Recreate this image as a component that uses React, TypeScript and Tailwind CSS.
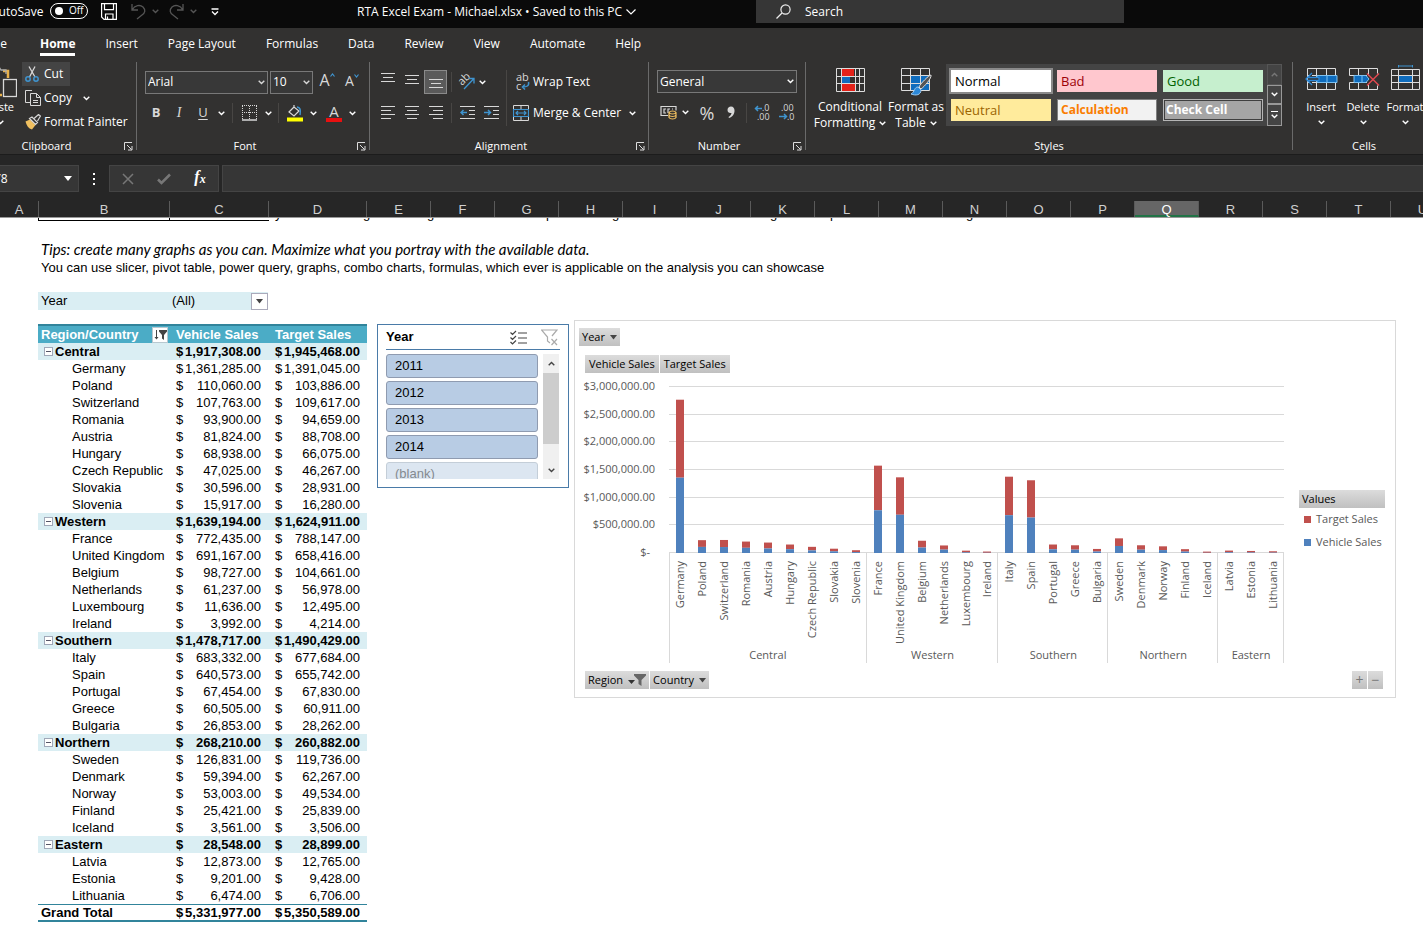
import React from "react";

const regions = [
  {
    name: "Central",
    vehicle: "1,917,308.00",
    target: "1,945,468.00",
    countries: [
      ["Germany", 1361285, 1391045],
      ["Poland", 110060, 103886],
      ["Switzerland", 107763, 109617],
      ["Romania", 93900, 94659],
      ["Austria", 81824, 88708],
      ["Hungary", 68938, 66075],
      ["Czech Republic", 47025, 46267],
      ["Slovakia", 30596, 28931],
      ["Slovenia", 15917, 16280],
    ],
  },
  {
    name: "Western",
    vehicle: "1,639,194.00",
    target: "1,624,911.00",
    countries: [
      ["France", 772435, 788147],
      ["United Kingdom", 691167, 658416],
      ["Belgium", 98727, 104661],
      ["Netherlands", 61237, 56978],
      ["Luxembourg", 11636, 12495],
      ["Ireland", 3992, 4214],
    ],
  },
  {
    name: "Southern",
    vehicle: "1,478,717.00",
    target: "1,490,429.00",
    countries: [
      ["Italy", 683332, 677684],
      ["Spain", 640573, 655742],
      ["Portugal", 67454, 67830],
      ["Greece", 60505, 60911],
      ["Bulgaria", 26853, 28262],
    ],
  },
  {
    name: "Northern",
    vehicle: "268,210.00",
    target: "260,882.00",
    countries: [
      ["Sweden", 126831, 119736],
      ["Denmark", 59394, 62267],
      ["Norway", 53003, 49534],
      ["Finland", 25421, 25839],
      ["Iceland", 3561, 3506],
    ],
  },
  {
    name: "Eastern",
    vehicle: "28,548.00",
    target: "28,899.00",
    countries: [
      ["Latvia", 12873, 12765],
      ["Estonia", 9201, 9428],
      ["Lithuania", 6474, 6706],
    ],
  },
] as { name: string; vehicle: string; target: string; countries: [string, number, number][] }[];

const money = (n: number) => n.toLocaleString("en-US", { minimumFractionDigits: 2 });

type BoxProps = { className?: string; children?: React.ReactNode };

const Chevron = ({ className = "" }: { className?: string }) => (
  <svg className={`shrink-0 ${className}`} width="7" height="5" viewBox="0 0 7 5" fill="none" stroke="currentColor" strokeWidth="1.4">
    <path d="M0.7 0.8 3.5 3.5 6.3 0.8" />
  </svg>
);

const Tool = ({ label, className = "", children }: BoxProps & { label: string }) => (
  <button aria-label={label} className={`flex h-6 shrink-0 items-center justify-center ${className}`}>
    {children}
  </button>
);

const Separator = () => <div className="h-[88px] w-px shrink-0 bg-[#6a6a6a]" />;

const Group = ({ title, className = "", launcher = true, children }: BoxProps & { title: string; launcher?: boolean }) => (
  <section aria-label={title} className={`flex h-[92px] shrink-0 flex-col justify-between ${className}`}>
    {children}
    <div className="flex h-4 items-center">
      <span className="flex-1 text-center text-[11px] leading-4">{title}</span>
      {launcher && (
        <button aria-label={`${title} settings`} className="flex w-4 items-center justify-end pr-[3px]">
          <svg width="9" height="9" viewBox="0 0 9 9" fill="none" stroke="#ddd">
            <path d="M0.5 8V0.5H8M3 3l4.5 4.5M8 4v4H4" />
          </svg>
        </button>
      )}
    </div>
  </section>
);

const Picker = ({ label, value, className = "" }: { label: string; value: string; className?: string }) => (
  <div className={`relative h-[23px] shrink-0 ${className}`}>
    <select aria-label={label} className="block h-full w-full appearance-none border border-[#787878] bg-[#383838] pl-[2px] text-xs text-white">
      <option>{value}</option>
    </select>
    <Chevron className="pointer-events-none absolute top-[9px] right-[3px]" />
  </div>
);

/* each pair is the [x, width] of a line of text in an alignment icon */
const Lines = ({ rows }: { rows: [number, number][] }) => (
  <svg width="14" height="16" viewBox="0 0 14 16" fill="#d8d8d8">
    {rows.map(([x, w], i) => (
      <rect key={i} x={x} y={1 + i * 4} width={w} height="1" />
    ))}
  </svg>
);

const TitleBar = () => (
  <header className="flex h-7 bg-[#0a0a0a] text-xs text-white">
    <div className="flex h-[23px] w-[357px] shrink-0 items-center">
      <span className="-ml-[9px] w-[59px] shrink-0">AutoSave</span>
      <button role="switch" aria-checked="false" aria-label="AutoSave" className="-mt-[2px] flex h-4 w-[38px] shrink-0 items-center gap-[6px] rounded-full border border-white pl-1 text-[10px]">
        <span className="h-2 w-2 rounded-full bg-white" />
        Off
      </button>
      <button aria-label="Save" className="ml-[13px]">
        <svg width="16" height="17" viewBox="0 0 16 17" fill="none" stroke="#fff" strokeWidth="1.2">
          <path d="M0.6 0.6h14.8v15.8H3L0.6 14zM3.5 0.6v6h9v-6M4.5 16v-5h7.500v5M6.500 16v-2.500" />
        </svg>
      </button>
      <button aria-label="Undo" className="ml-[14px] flex items-center gap-[6px] text-[#555]">
        <svg width="15" height="17" viewBox="0 0 15 17" fill="none" stroke="currentColor" strokeWidth="1.3">
          <path d="M1 1v6h6M1 7C4 2 9 1.500 12 4c3 3 2 6-1 8l-5 4" />
        </svg>
        <Chevron />
      </button>
      <button aria-label="Redo" className="ml-[10px] flex items-center gap-[6px] text-[#555]">
        <svg width="15" height="17" viewBox="0 0 15 17" fill="none" stroke="currentColor" strokeWidth="1.3">
          <path d="M14 1v6H8M14 7C11 2 6 1.500 3 4c-3 3-2 6 1 8l5 4" />
        </svg>
        <Chevron />
      </button>
      <button aria-label="Customize toolbar" className="ml-[14px]">
        <svg width="8" height="8" viewBox="0 0 8 8" fill="none" stroke="#fff" strokeWidth="1.3">
          <path d="M0.500 1h7M1 3.500 4 6.500 7 3.500" />
        </svg>
      </button>
    </div>
    <button className="flex h-[23px] w-[399px] shrink-0 items-center gap-1 text-left">
      RTA Excel Exam - Michael.xlsx&nbsp;•&nbsp;Saved to this PC
      <svg width="10" height="6" viewBox="0 0 10 6" fill="none" stroke="#fff" strokeWidth="1.2">
        <path d="M0.500 0.500 5 5 9.500 0.500" />
      </svg>
    </button>
    <label className="flex h-[23px] w-[368px] items-center gap-[14px] bg-[#363636] pl-5">
      <svg width="15" height="15" viewBox="0 0 15 15" fill="none" stroke="#eee" strokeWidth="1.2">
        <circle cx="9.500" cy="5.500" r="4.600" />
        <path d="M6 9 0.500 14.500" />
      </svg>
      <input type="search" aria-label="Search" placeholder="Search" className="min-w-0 flex-1 bg-transparent placeholder:text-white" />
    </label>
  </header>
);

const tabs = ["Insert", "Page Layout", "Formulas", "Data", "Review", "View", "Automate", "Help"];

const Tabs = () => (
  <nav className="flex h-[34px] gap-[30px] text-xs leading-[18px]">
    <a href="#file" className="-ml-[12px] w-[22px] pt-[7px]">File</a>
    <a href="#home" className="pt-[7px] font-bold">
      Home
      <span className="block h-[3px] bg-white" />
    </a>
    {tabs.map((tab) => (
      <a key={tab} href={`#${tab}`} className="pt-[7px] whitespace-nowrap">
        {tab}
      </a>
    ))}
  </nav>
);

const Clipboard = () => (
  <div className="w-[136px] shrink-0 overflow-hidden">
    <Group title="Clipboard" className="-ml-[27px] w-[163px]">
      <div className="flex">
        <button className="flex w-[49px] flex-col items-center pt-1 pl-[5px] text-[11px] leading-4">
          <svg width="34" height="33" viewBox="0 0 34 33" fill="none">
            <path d="M10 5H5v24h14M25 12V5h-5" stroke="#e8b14a" strokeWidth="2.500" />
            <path d="M10 8V4h4l2-3 2 3h5v4" stroke="#aaa" strokeWidth="1.300" />
            <rect x="20.500" y="13.500" width="13" height="17" fill="#323130" stroke="#d8d8d8" strokeWidth="1.300" />
          </svg>
          Paste
          <Chevron className="mt-[5px]" />
        </button>
        <div className="flex flex-col items-start text-xs">
          <button className="flex h-6 items-center gap-1 bg-[#444] px-[3px] pr-[7px]">
            <svg width="15" height="16" viewBox="0 0 15 16" fill="none">
              <path d="M4 0.500 10 11M10 0.500 4.500 11" stroke="#d8d8d8" strokeWidth="1.300" />
              <circle cx="3" cy="13" r="2.200" stroke="#3f94cf" strokeWidth="1.500" />
              <circle cx="11" cy="13" r="2.200" stroke="#3f94cf" strokeWidth="1.500" />
            </svg>
            Cut
          </button>
          <button className="flex h-6 items-center gap-[3px] px-[3px]">
            <svg width="16" height="16" viewBox="0 0 16 16" fill="none" stroke="#d8d8d8">
              <path d="M5 12.500H0.500v-12H7M5.500 3.500h6l4 4v8h-10zM11.500 3.500v4h4M8 10.500h5M8 12.500h5" />
            </svg>
            Copy
            <Chevron className="ml-2" />
          </button>
          <button className="flex h-6 items-center gap-[3px] px-[3px] whitespace-nowrap">
            <svg width="16" height="16" viewBox="0 0 16 16" fill="none">
              <path d="M0.500 7.500 5 5.500l5.500 5.500L7 15.500C3.500 14.500 1.500 11.500 0.500 7.500z" fill="#f0c060" />
              <path d="M4.500 4.500 7 3l5.500 5.500-2 2zM9 4.500l4.500-4 2 1.500-3 5" stroke="#d8d8d8" strokeWidth="1.200" />
            </svg>
            Format Painter
          </button>
        </div>
      </div>
    </Group>
  </div>
);

const Caret = ({ up = false }: { up?: boolean }) => (
  <svg className="mb-[10px]" width="5" height="4" viewBox="0 0 5 4" fill="none" stroke="#3f94cf" strokeWidth="1.200">
    <path d={up ? "M0.500 3.500 2.500 1 4.500 3.500" : "M0.500 0.500 2.500 3 4.500 0.500"} />
  </svg>
);

const FontGroup = () => (
  <Group title="Font" className="w-[232px]">
    <div className="flex flex-col gap-[7px] pt-2 pl-2">
      <div className="flex h-6 items-center text-[#d8d8d8]">
        <Picker label="Font" value="Arial" className="w-[123px]" />
        <Picker label="Font size" value="10" className="ml-[2px] w-[43px]" />
        <Tool label="Increase font size" className="w-[28px] pb-1 text-base">
          A
          <Caret up />
        </Tool>
        <Tool label="Decrease font size" className="w-[22px] pb-[2px] text-sm">
          A
          <Caret />
        </Tool>
      </div>
      <div className="flex h-6 items-center text-[#d8d8d8]">
        <Tool label="Bold" className="w-[22px] text-[13px] font-bold">B</Tool>
        <Tool label="Italic" className="w-6 font-[Liberation_Serif] text-sm italic">I</Tool>
        <Tool label="Underline" className="w-6 text-[13px] underline underline-offset-2">U</Tool>
        <Tool label="Underline style" className="w-3 text-white"><Chevron /></Tool>
        <div className="mx-[5px] h-5 w-px bg-[#484644]" />
        <Tool label="Borders" className="w-6">
          <svg width="16" height="16" viewBox="0 0 16 16" fill="none" stroke="#d8d8d8">
            <path d="M0 0.500h15M0 7.500h15M0.500 1v13M7.500 1v13M14.500 1v13" strokeDasharray="1 1" />
            <path d="M0 15h15" strokeWidth="1.500" />
          </svg>
        </Tool>
        <Tool label="Border style" className="w-3 text-white"><Chevron /></Tool>
        <div className="mx-1 h-5 w-px bg-[#484644]" />
        <Tool label="Fill color" className="w-6">
          <svg width="18" height="17" viewBox="0 0 18 17" fill="none">
            <path d="M8 2 3 7l5 4 5-5zM8 2V0" stroke="#d8d8d8" strokeWidth="1.200" />
            <path d="M11 2c3 0 4 3 3 8" stroke="#3f94cf" strokeWidth="1.500" />
            <rect x="1" y="12.500" width="16" height="4" fill="#ffff00" />
          </svg>
        </Tool>
        <Tool label="Fill colors" className="w-3 text-white"><Chevron /></Tool>
        <Tool label="Font color" className="ml-[3px] w-6 flex-col">
          <span className="text-[15px] leading-[13px]">A</span>
          <span className="h-1 w-4 bg-[#e81010]" />
        </Tool>
        <Tool label="Font colors" className="w-3 text-white"><Chevron /></Tool>
      </div>
    </div>
  </Group>
);

const Alignment = () => (
  <Group title="Alignment" className="w-[278px]">
    <div className="flex pt-2">
      <div className="flex w-[136px] shrink-0 flex-col gap-[7px] pl-[6px]">
        <div className="flex h-6 items-center">
          <Tool label="Top align" className="w-6 pb-1"><Lines rows={[[0, 14], [2, 10], [0, 14]]} /></Tool>
          <Tool label="Middle align" className="w-6"><Lines rows={[[0, 14], [2, 10], [0, 14]]} /></Tool>
          <Tool label="Bottom align" className="w-[23px] border border-[#8a8a8a] bg-[#5a5a5a] pt-[7px]"><Lines rows={[[0, 14], [2, 10], [0, 14]]} /></Tool>
          <div className="mx-1 h-5 w-px bg-[#484644]" />
          <Tool label="Orientation" className="w-5">
            <svg className="overflow-visible" width="17" height="16" viewBox="0 0 17 16" fill="none">
              <text fontSize="11" fill="#d8d8d8" transform="translate(4 12) rotate(-45)">ab</text>
              <path d="M6 15 15.500 5M11 4.500h5v5" stroke="#3f94cf" strokeWidth="1.300" />
            </svg>
          </Tool>
          <Tool label="Orientations" className="w-3 text-white"><Chevron /></Tool>
        </div>
        <div className="flex h-6 items-center">
          <Tool label="Align left" className="w-6"><Lines rows={[[0, 14], [0, 10], [0, 14], [0, 10]]} /></Tool>
          <Tool label="Center" className="w-6"><Lines rows={[[0, 14], [2, 10], [0, 14], [2, 10]]} /></Tool>
          <Tool label="Align right" className="w-6"><Lines rows={[[0, 14], [4, 10], [0, 14], [4, 10]]} /></Tool>
          <div className="mx-[3px] h-5 w-px bg-[#484644]" />
          <Tool label="Decrease indent" className="w-6">
            <svg width="15" height="14" viewBox="0 0 15 14" fill="none">
              <path d="M0 0.500h15M9 4.500h6M9 8.500h6M0 12.500h15" stroke="#d8d8d8" />
              <path d="M7 6.500H1M3.500 4 1 6.500 3.500 9" stroke="#3f94cf" strokeWidth="1.500" />
            </svg>
          </Tool>
          <Tool label="Increase indent" className="w-6">
            <svg width="15" height="14" viewBox="0 0 15 14" fill="none">
              <path d="M0 0.500h15M9 4.500h6M9 8.500h6M0 12.500h15" stroke="#d8d8d8" />
              <path d="M0 6.500h6M4 4l2.500 2.500L4 9" stroke="#3f94cf" strokeWidth="1.500" />
            </svg>
          </Tool>
        </div>
      </div>
      <div className="h-[56px] w-px shrink-0 bg-[#484644]" />
      <div className="flex flex-col gap-[7px] pl-[6px] text-xs whitespace-nowrap">
        <button className="flex h-6 items-center gap-[3px]">
          <svg className="overflow-visible" width="17" height="17" viewBox="0 0 17 17" fill="none">
            <text x="3" y="7" fontSize="11" fill="#d8d8d8">ab</text>
            <text x="3" y="16" fontSize="11" fill="#d8d8d8">c</text>
            <path d="M15.500 8c1 4-2 5-6 5M12 10.500 9.500 13l2.500 2.500" stroke="#3f94cf" strokeWidth="1.500" />
          </svg>
          Wrap Text
        </button>
        <button className="flex h-6 items-center gap-1">
          <svg width="16" height="16" viewBox="0 0 16 16" fill="none">
            <path d="M0.500 0.500h15v15H0.500zM8 1v3M8 12v3" stroke="#d8d8d8" />
            <path d="M0.500 4.500h15v7H0.500zM3 8h10M5 6 3 8l2 2M11 6l2 2-2 2" stroke="#3f94cf" strokeWidth="1.200" />
          </svg>
          Merge &amp; Center
          <Chevron className="ml-[4px]" />
        </button>
      </div>
    </div>
  </Group>
);

const NumberGroup = () => (
  <Group title="Number" className="w-[156px]">
    <div className="flex flex-col gap-[7px] pt-2 pl-2">
      <Picker label="Number format" value="General" className="w-[140px]" />
      <div className="flex h-6 items-center pt-px text-[#d8d8d8]">
        <Tool label="Accounting format" className="w-[22px]">
          <svg width="17" height="15" viewBox="0 0 17 15" fill="none">
            <path d="M8 10.500H1v-9h15v4M6 4H4v4h2M8 8V4h2M13 4h-1" stroke="#d8d8d8" strokeWidth="1.200" />
            <path d="M9 7.500v5c1 2 6 2 7 0v-5c-1-2-6-2-7 0c1 2 6 2 7 0M9 10c1 2 6 2 7 0" fill="#323130" stroke="#f0c060" strokeWidth="1.200" />
          </svg>
        </Tool>
        <Tool label="Accounting formats" className="w-3 text-white"><Chevron /></Tool>
        <Tool label="Percent style" className="ml-1 w-6 text-lg">%</Tool>
        <Tool label="Comma style" className="w-6">
          <svg width="8" height="13" viewBox="0 0 8 13" fill="#d8d8d8">
            <path d="M4 0.500c5 0 5 9-2 11.500L1.500 11C3 10 4.500 8.500 4.500 7 2 7.500 0.500 6 0.500 4c0-2 1.500-3.500 3.500-3.500z" />
          </svg>
        </Tool>
        <div className="mx-[3px] h-5 w-px bg-[#484644]" />
        <Tool label="Increase decimal" className="w-6">
          <svg className="overflow-visible" width="17" height="17" viewBox="0 0 17 17" fill="#d8d8d8">
            <text x="8" y="7" fontSize="9">.0</text>
            <text x="3" y="16" fontSize="9">.00</text>
            <path d="M8 4.500H1.500M4 2 1.500 4.500 4 7" fill="none" stroke="#3f94cf" strokeWidth="1.500" />
          </svg>
        </Tool>
        <Tool label="Decrease decimal" className="w-6">
          <svg className="overflow-visible" width="17" height="17" viewBox="0 0 17 17" fill="#d8d8d8">
            <text x="3" y="7" fontSize="9">.00</text>
            <text x="9" y="16" fontSize="9">.0</text>
            <path d="M1 12.500h7M6 10l2.500 2.500L6 15" fill="none" stroke="#3f94cf" strokeWidth="1.500" />
          </svg>
        </Tool>
      </div>
    </div>
  </Group>
);

const Styles = () => (
  <Group title="Styles" launcher={false} className="w-[486px]">
    <div className="flex items-start pt-[2px] pl-[7px]">
      <button className="flex w-[74px] shrink-0 flex-col items-center pt-1 text-xs leading-4">
        <svg className="mb-[7px]" width="29" height="24" viewBox="0 0 29 24" fill="none">
          <path d="M6 1h12v7H6zM6 16h14v7H6z" fill="#e32219" />
          <path d="M6 8.500h8v7H6z" fill="#0f6cbd" />
          <path d="M0.500 0.500h28v23H0.500zM0.500 8.500h28M0.500 15.500h28M5.500 0.500v23M19.500 0.500v23M23.500 0.500v23" stroke="#ddd" />
        </svg>
        Conditional
        <span className="flex items-center gap-1">Formatting <Chevron /></span>
      </button>
      <button className="flex w-[58px] shrink-0 flex-col items-center pt-1 text-xs leading-4 whitespace-nowrap">
        <svg className="mb-[3px]" width="31" height="28" viewBox="0 0 31 28" fill="none">
          <path d="M10 8h18v15H10z" fill="#0f6cbd" />
          <path d="M0.500 0.500h28v22H0.500zM0.500 7.500h28M0.500 15.500h28M9.500 0.500v22M19.500 0.500v22" stroke="#ddd" />
          <path d="M30 7c-2 0-11 9-12 12l2 2C23 19 31 10 30 7z" fill="#555" stroke="#ddd" />
          <path d="M17 19c-4 0-3 5-7 7 5 2 10 1 10-4z" fill="#2b88d8" stroke="#9cc8ee" />
        </svg>
        Format as
        <span className="flex items-center gap-1">Table <Chevron /></span>
      </button>
      <div className="ml-px flex bg-[#444] text-[13px]">
        <div className="grid grid-cols-[100px_100px_100px] gap-[6px] py-[5px] pt-[6px] pr-1 pl-[5px] text-left leading-5">
          <button className="h-[22px] bg-white pl-1 text-left text-black outline-2 outline-[#8a8a8a]">Normal</button>
          <button className="h-[22px] bg-[#ffc7ce] pl-1 text-left text-[#9c0006]">Bad</button>
          <button className="h-[22px] bg-[#c6efce] pl-1 text-left text-[#006100]">Good</button>
          <button className="h-[22px] bg-[#ffeb9c] pl-1 text-left text-[#9c6500]">Neutral</button>
          <button className="h-[22px] border border-[#7f7f7f] bg-[#f2f2f2] pl-[3px] text-left text-xs leading-5 font-bold text-[#fa7d00]">Calculation</button>
          <button className="h-[22px] border border-[#b5b5b5] bg-[#3f3f3f] p-px text-left text-xs font-bold text-white">
            <span className="block bg-[#a5a5a5] pl-px leading-[18px]">Check Cell</span>
          </button>
        </div>
        <div className="flex flex-col">
          <button aria-label="Previous styles" className="flex h-[21px] w-[15px] items-center justify-center border border-[#555] text-[#777]">
            <Chevron className="rotate-180" />
          </button>
          <button aria-label="Next styles" className="flex h-[19px] w-[15px] items-center justify-center border border-[#999]">
            <Chevron />
          </button>
          <button aria-label="All styles" className="flex h-[22px] w-[15px] flex-col items-center justify-center gap-[2px] border border-[#999]">
            <span className="h-px w-[7px] bg-white" />
            <Chevron />
          </button>
        </div>
      </div>
    </div>
  </Group>
);

const gridPath = "M2.500 3.500h28v21h-28zM2.500 10.500h28M2.500 17.500h28M11.500 3.500v21M21.500 3.500v21";

const Cells = () => (
  <Group title="Cells" launcher={false} className="w-[142px]">
    <div className="flex pt-[3px] pl-[7px] text-[11px] leading-4">
      <button className="flex w-[42px] shrink-0 flex-col items-center">
        <svg className="mb-[6px]" width="33" height="28" viewBox="0 0 33 28" fill="none">
          <path d={gridPath} stroke="#ddd" />
          <path d="M12 10.500h20v7H12zM22 10.500v7" fill="#0f6cbd" stroke="#7cc0f0" />
          <path d="M7 8 1 14l6 6M2 12.500h12v3H2" fill="#323130" stroke="#2b88d8" strokeWidth="1.300" />
        </svg>
        Insert
        <Chevron className="mt-[5px]" />
      </button>
      <button className="flex w-[42px] shrink-0 flex-col items-center">
        <svg className="mb-[6px]" width="33" height="28" viewBox="0 0 33 28" fill="none">
          <path d="M2.500 10.500v-7h28v5M2.500 17.500v7h28v-4M2.500 10.500H20M2.500 17.500H20M11.500 3.500v7M21.500 3.500v7M11.500 17.500v7M21.500 20v4" stroke="#ddd" />
          <path d="M7 10.500h12l3 3.500-3 3.500H7zM15 10.500v7" fill="#0f6cbd" stroke="#7cc0f0" />
          <path d="M20 8.500l12 12M32 8.500l-12 12" stroke="#e0484f" strokeWidth="1.500" />
        </svg>
        Delete
        <Chevron className="mt-[5px]" />
      </button>
      <button className="flex w-[42px] shrink-0 flex-col items-center">
        <svg className="mb-[6px]" width="33" height="28" viewBox="0 0 33 28" fill="none">
          <path d="M2.500 4.500h28v20h-28zM2.500 10.500h28M2.500 17.500h28M9.500 4.500v20M23.500 4.500v20" stroke="#ddd" />
          <path d="M10 11h13v6H10z" fill="#0f6cbd" />
          <path d="M9 1h15M9.500 0v2.500M23.500 0v2.500" stroke="#3f94cf" />
        </svg>
        Format
        <Chevron className="mt-[5px]" />
      </button>
    </div>
  </Group>
);

const Ribbon = () => (
  <div className="overflow-hidden border-b border-[#1c1c1c] bg-[#323130] text-white">
    <Tabs />
    <div className="flex">
      <Clipboard />
      <Separator />
      <FontGroup />
      <Separator />
      <Alignment />
      <Separator />
      <NumberGroup />
      <Separator />
      <Styles />
      <Separator />
      <Cells />
    </div>
  </div>
);

const FormulaBar = () => (
  <div className="flex bg-[#262626] pt-[10px] pb-[9px] text-white">
    <button aria-label="Name box" className="flex h-[27px] w-[79px] shrink-0 items-center justify-between border border-l-0 border-[#444] bg-[#363636] pr-[6px] text-xs">
      <span className="-ml-[6px]">Y8</span>
      <svg width="8" height="5" viewBox="0 0 8 5" fill="#fff"><path d="M0 0h8L4 5z" /></svg>
    </button>
    <div className="flex w-[30px] shrink-0 flex-col items-center justify-center gap-[3px]">
      <span className="h-[2px] w-[2px] bg-white" />
      <span className="h-[2px] w-[2px] bg-white" />
      <span className="h-[2px] w-[2px] bg-white" />
    </div>
    <div className="flex h-[27px] w-[110px] shrink-0 items-center border border-[#444] bg-[#363636]">
      <Tool label="Cancel" className="w-9">
        <svg width="12" height="12" viewBox="0 0 12 12" stroke="#777" strokeWidth="1.500"><path d="M1 1l10 10M11 1 1 11" /></svg>
      </Tool>
      <Tool label="Enter" className="w-9">
        <svg width="14" height="12" viewBox="0 0 14 12" fill="none" stroke="#777" strokeWidth="2.500"><path d="M1 6.500 4.500 10 13 1.500" /></svg>
      </Tool>
      <Tool label="Insert function" className="w-9 pb-1 font-[Liberation_Serif] text-base font-bold italic">
        f<span className="pt-1 text-xs">x</span>
      </Tool>
    </div>
    <input aria-label="Formula" className="ml-[3px] h-[27px] min-w-0 flex-1 border border-r-0 border-[#444] bg-[#363636] px-2" />
  </div>
);

const columns = "ABCDEFGHIJKLMNOPQRSTU".split("");
const columnWidth: Record<string, string> = {
  A: "w-[39px]",
  B: "w-[131px]",
  C: "w-[99px]",
  D: "w-[98px]",
  Q: "w-16 bg-[#666] border-b-2 border-b-[#217346] text-white",
};

const ColumnHeads = () => (
  <div className="flex h-[17px] overflow-hidden border-b border-[#999] bg-[#262626] font-[Liberation_Sans] text-[13px] leading-[18px] text-[#d0d0d0]">
    {columns.map((c) => (
      <div key={c} className={`shrink-0 border-r border-[#5a5a5a] text-center ${columnWidth[c] ?? "w-16"}`}>
        {c}
      </div>
    ))}
  </div>
);

/* tails of the row that is scrolled under the column heads */
const tails = [
  ["y", "w-[88px]"],
  ["g", "w-16"],
  ["g", "w-[119px]"],
  ["p", "w-[66px]"],
  ["g", "w-[158px]"],
  ["g", "w-[60px]"],
  ["p", "w-[136px]"],
  ["g", "w-4"],
];

const ScrolledRow = () => (
  <div className="flex h-[3px] items-end overflow-hidden pl-[38px]">
    <div className="h-full w-[132px] shrink-0 border-x border-b border-black" />
    <div className="h-full w-[99px] shrink-0 border-b border-black" />
    <div className="flex pl-[6px] text-[13px] leading-[15px]">
      {tails.map(([letter, width], i) => (
        <span key={i} className={`shrink-0 ${width}`}>{letter}</span>
      ))}
    </div>
  </div>
);

const Amount = ({ value }: { value: string }) => (
  <td className="p-0">
    <div className="flex justify-between px-[7px]">
      <span>$</span>
      <span>{value}</span>
    </div>
  </td>
);

const PivotTable = () => (
  <table className="mt-1 w-[329px] shrink-0 table-fixed border-collapse text-[13px] leading-[17px] text-black">
    <colgroup>
      <col className="w-[131px]" />
      <col className="w-[99px]" />
      <col className="w-[99px]" />
    </colgroup>
    <thead>
      <tr className="h-[18px] border-t-2 border-[#31849b] bg-[#4bacc6] text-left text-white">
        <th className="p-0 pl-[3px]">
          <div className="flex h-4 items-center justify-between">
            Region/Country
            <button aria-label="Filter regions" className="mr-px flex h-4 w-4 items-center justify-center border border-[#b8c8d0] bg-white">
              <svg width="13" height="10" viewBox="0 0 13 10" fill="#444">
                <path d="M5 0h8v1.500L10 5v5L8 8.500V5L5 1.500zM2 0h1v7h1.500l-2 2.500L0.500 7H2z" />
              </svg>
            </button>
          </div>
        </th>
        <th className="p-0 pl-[7px] leading-4 whitespace-nowrap">Vehicle Sales</th>
        <th className="p-0 pl-[7px] leading-4 whitespace-nowrap">Target Sales</th>
      </tr>
    </thead>
    <tbody>
      {regions.map((region) => (
        <React.Fragment key={region.name}>
          <tr className="h-[17px] bg-[#daeef3] font-bold">
            <td className="p-0">
              <div className="flex items-center gap-[2px] pl-[6px]">
                <button aria-label={`Collapse ${region.name}`} className="flex h-[9px] w-[9px] items-center justify-center border border-[#a0a8b8] bg-white">
                  <span className="h-px w-[5px] bg-[#556]" />
                </button>
                {region.name}
              </div>
            </td>
            <Amount value={region.vehicle} />
            <Amount value={region.target} />
          </tr>
          {region.countries.map(([name, vehicle, target]) => (
            <tr key={name} className="h-[17px]">
              <td className="p-0 pl-[34px] whitespace-nowrap">{name}</td>
              <Amount value={money(vehicle)} />
              <Amount value={money(target)} />
            </tr>
          ))}
        </React.Fragment>
      ))}
      <tr className="border-t border-b-2 border-t-[#31849b] border-b-[#31849b] leading-[15px] font-bold">
        <td className="p-0 pl-[3px]">Grand Total</td>
        <Amount value="5,331,977.00" />
        <Amount value="5,350,589.00" />
      </tr>
    </tbody>
  </table>
);

const Slicer = () => (
  <section aria-label="Year slicer" className="mt-1 ml-[10px] h-[164px] w-[192px] shrink-0 border border-[#4a7ba8] px-2 text-[13px] text-black">
    <div className="flex h-[25px] items-center border-b border-[#4a7ba8]">
      <h2 className="flex-1 font-bold">Year</h2>
      <button aria-label="Multi-select" className="mr-[14px]">
        <svg width="17" height="15" viewBox="0 0 17 15" fill="none" stroke="#444" strokeWidth="1.200">
          <path d="M0.500 2.500l2 2L6 1M0.500 7.500l2 2L6 6M0.500 12l2 2L6 10.500M8 3h9M8 8h9M8 13h9" />
        </svg>
      </button>
      <button aria-label="Clear filter" className="mr-[2px]">
        <svg width="17" height="17" viewBox="0 0 17 17" fill="none" stroke="#aaa" strokeWidth="1.200">
          <path d="M9 14l-2.500-2V8L0.500 1h15.500L11 7M10.500 10l5.500 6M16 10l-5.500 6" />
        </svg>
      </button>
    </div>
    <div className="mt-1 flex h-[125px] justify-between">
      <div className="flex w-[152px] flex-col gap-[3px] overflow-hidden leading-[22px]">
        {["2011", "2012", "2013", "2014"].map((year) => (
          <button key={year} className="h-6 shrink-0 rounded-[3px] border border-[#8f9bb0] bg-[#b8cce4] pl-2 text-left">
            {year}
          </button>
        ))}
        <button className="h-6 shrink-0 rounded-[3px] border border-[#c4ced8] bg-[#dce6f1] pl-2 text-left text-[#848a90]">(blank)</button>
      </div>
      <div className="mr-px flex w-4 flex-col items-center bg-[#f0f0f0] text-[#444]">
        <Chevron className="my-[7px] rotate-180" />
        <div className="h-[71px] w-full bg-[#cdcdcd]" />
        <Chevron className="mt-auto mb-[6px]" />
      </div>
    </div>
  </section>
);

const FieldButton = ({ className = "", children }: BoxProps) => (
  <button className={`flex h-[18px] items-center gap-[5px] bg-linear-to-b from-[#dcdcdc] to-[#c0c0c0] text-[11px] whitespace-nowrap text-black ${className}`}>
    {children}
  </button>
);

const Triangle = () => (
  <svg width="7" height="5" viewBox="0 0 7 5" fill="#444"><path d="M0 0h7L3.500 4.500z" /></svg>
);

const top = 14;
const bottom = 180;
const left = 94;
const step = 615 / 28;
const scale = (bottom - top) / 3000000;
const ticks = ["$3,000,000.00", "$2,500,000.00", "$2,000,000.00", "$1,500,000.00", "$1,000,000.00", "$500,000.00", "$-"];
const bars = regions.flatMap((region) => region.countries);
const spans = regions.map((region, i) => {
  const start = regions.slice(0, i).reduce((sum, r) => sum + r.countries.length, 0);
  return { name: region.name, from: left + start * step, to: left + (start + region.countries.length) * step };
});

const SalesChart = () => (
  <svg role="img" aria-label="Vehicle and target sales by country" className="min-w-0 flex-1" viewBox="0 0 724 298" fontSize="11" fill="#595959">
    {ticks.map((tick, i) => {
      const y = top + (i * (bottom - top)) / 6;
      return (
        <g key={tick}>
          <path d={`M${left} ${Math.round(y) - 0.5}H709`} stroke="#d9d9d9" />
          <text x={i === 6 ? 75 : 80} y={y + 3} textAnchor="end">{tick}</text>
        </g>
      );
    })}
    {bars.map(([name, vehicle, target], i) => {
      const x = left + (i + 0.5) * step;
      return (
        <g key={name}>
          <rect x={Math.round(x - 4)} y={bottom - (vehicle + target) * scale - 1} width="8" height={target * scale + 1} fill="#c0504d" />
          <rect x={Math.round(x - 4)} y={bottom - vehicle * scale} width="8" height={vehicle * scale} fill="#4f81bd" />
          <text transform={`translate(${x + 4} 188) rotate(-90)`} textAnchor="end">{name}</text>
        </g>
      );
    })}
    <path d="M94.500 180V290" stroke="#d9d9d9" />
    {spans.map((span) => (
      <g key={span.name}>
        <path d={`M${Math.round(span.to) - 0.5} 180V290`} stroke="#d9d9d9" />
        <text x={(span.from + span.to) / 2} y="286" textAnchor="middle">{span.name}</text>
      </g>
    ))}
  </svg>
);

const PivotChart = () => (
  <section aria-label="Sales chart" className="mr-[27px] ml-[5px] flex min-w-0 flex-1 flex-col border border-[#d9d9d9] pt-[7px] pb-2 font-[Open_Sans]">
    <div className="pl-1">
      <FieldButton className="px-[3px]">Year <Triangle /></FieldButton>
    </div>
    <div className="mt-[9px] flex gap-px pl-[10px]">
      <FieldButton className="px-1">Vehicle Sales</FieldButton>
      <FieldButton className="px-1">Target Sales</FieldButton>
    </div>
    <div className="flex pr-[10px]">
      <SalesChart />
      <div className="w-[86px] shrink-0 pt-[117px] text-[11px] text-[#595959]">
        <FieldButton className="w-full px-[3px]">Values</FieldButton>
        <ul>
          <li className="flex h-[23px] items-center gap-[5px] pl-[5px]">
            <span className="h-[7px] w-[7px] bg-[#c0504d]" />
            Target Sales
          </li>
          <li className="flex h-[23px] items-center gap-[5px] pl-[5px]">
            <span className="h-[7px] w-[7px] bg-[#4f81bd]" />
            Vehicle Sales
          </li>
        </ul>
      </div>
    </div>
    <div className="flex gap-px pr-3 pl-[10px]">
      <FieldButton className="px-[3px]">
        Region
        <svg width="18" height="12" viewBox="0 0 18 12" fill="#666">
          <path d="M6 0h12v1.500L13.500 6v6L10.500 10V6L6 1.500z" />
          <path d="M0 6h7L3.500 10z" fill="#333" />
        </svg>
      </FieldButton>
      <FieldButton className="px-[3px]">Country <Triangle /></FieldButton>
      <div className="flex-1" />
      <FieldButton className="w-[15px] justify-center"><span className="text-sm text-[#777]">+</span></FieldButton>
      <FieldButton className="w-[15px] justify-center"><span className="text-sm text-[#777]">−</span></FieldButton>
    </div>
  </section>
);

const Sheet = () => (
  <main className="bg-white font-[Liberation_Sans] text-[13px] text-black">
    <ScrolledRow />
    <div className="pt-[19px] pl-[41px] leading-[19px]">
      <p className="font-[Lato] text-[15px] leading-[18px] italic">Tips: create many graphs as you can. Maximize what you portray with the available data.</p>
      <p>You can use slicer, pivot table, power query, graphs, combo charts, formulas, which ever is applicable on the analysis you can showcase</p>
    </div>
    <div className="mt-[15px] ml-[38px] flex h-[18px] w-[230px] items-center bg-[#daeef3] pl-[3px]">
      <span className="w-[131px]">Year</span>
      <span className="flex-1">(All)</span>
      <button aria-label="Filter by year" className="flex h-[17px] w-[17px] items-center justify-center border border-[#aab] bg-white">
        <Triangle />
      </button>
    </div>
    <div className="mt-[10px] flex items-start pl-[38px]">
      <PivotTable />
      <Slicer />
      <PivotChart />
    </div>
  </main>
);

const App = () => {
  return (
    <div className="min-h-screen overflow-x-hidden bg-white font-[Open_Sans]">
      <TitleBar />
      <Ribbon />
      <FormulaBar />
      <ColumnHeads />
      <Sheet />
    </div>
  );
};

export default App;
